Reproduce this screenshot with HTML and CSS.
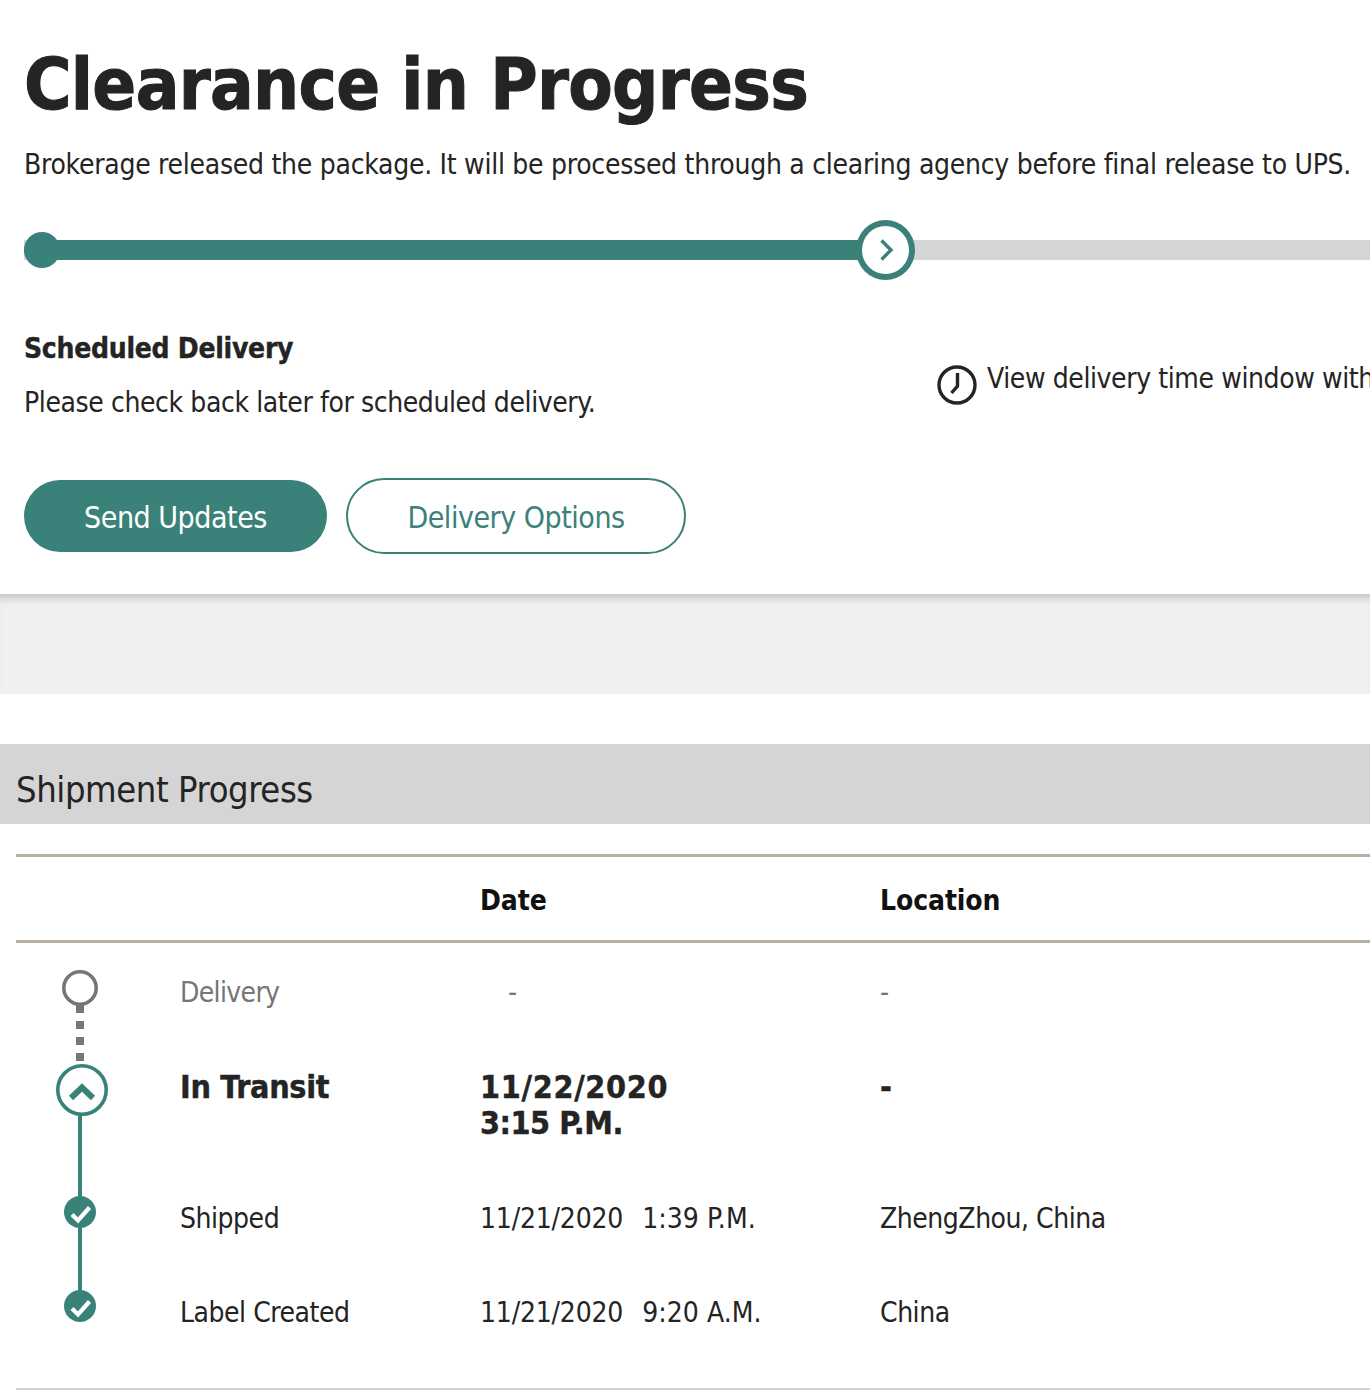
FILE: index.html
```html
<!DOCTYPE html>
<html lang="en">
<head>
<meta charset="utf-8">
<title>Clearance in Progress</title>
<link rel="stylesheet" href="styles.css">
</head>
<body>
<section class="status">
  <h1 class="title">Clearance in Progress</h1>
  <p class="lede">Brokerage released the package. It will be processed through a clearing agency before final release to UPS.</p>
  <div class="track">
    <div class="track-fill"></div>
    <span class="track-start"></span>
    <span class="track-now">
      <svg width="20" height="24" viewBox="0 0 20 24"><path d="M5.5 2.5 15 12 5.5 21.5" fill="none" stroke="#3a8279" stroke-width="3.4"/></svg>
    </span>
  </div>
  <div class="schedule">
    <div class="schedule-main">
      <h2 class="schedule-title">Scheduled Delivery</h2>
      <p class="schedule-text">Please check back later for scheduled delivery.</p>
    </div>
    <div class="window">
      <svg class="clock" width="40" height="40" viewBox="0 0 40 40"><circle cx="20" cy="20" r="18" fill="none" stroke="#242424" stroke-width="3.4"/><path d="M20.5 8V21L14.5 28" fill="none" stroke="#242424" stroke-width="3.4"/></svg>
      <span class="window-text">View delivery time window with</span>
    </div>
  </div>
  <div class="actions">
    <a class="btn btn-solid">Send Updates</a>
    <a class="btn btn-line">Delivery Options</a>
  </div>
</section>
<div class="band"></div>
<section class="progress">
  <h2 class="progress-bar">Shipment Progress</h2>
  <div class="table">
    <div class="table-head">
      <span></span><span></span>
      <span>Date</span><span>Location</span>
    </div>
    <div class="table-body">
      <svg class="timeline" width="164" height="445" viewBox="0 0 164 445">
        <circle cx="64" cy="45" r="16.2" fill="none" stroke="#767676" stroke-width="3.6"/>
        <path d="M64 62V121" stroke="#767676" stroke-width="8" stroke-dasharray="8 8" fill="none"/>
        <path d="M64 172V347" stroke="#3a8279" stroke-width="4" fill="none"/>
        <circle cx="66" cy="147" r="24.2" fill="#fff" stroke="#3a8279" stroke-width="3.6"/>
        <path d="M55 155 66 144.5 77 155" fill="none" stroke="#3a8279" stroke-width="6"/>
        <circle cx="64" cy="269" r="16" fill="#3a8279"/>
        <path d="M56 271.5 62 277.5 73.5 264.5" fill="none" stroke="#fff" stroke-width="4.2"/>
        <circle cx="64" cy="363" r="16" fill="#3a8279"/>
        <path d="M56 365.5 62 371.5 73.5 358.5" fill="none" stroke="#fff" stroke-width="4.2"/>
      </svg>
      <div class="row row-muted"><span>Delivery</span><span class="dash">-</span><span>-</span></div>
      <div class="row row-current"><span class="current-name">In Transit</span><span class="current-when"><span class="current-date">11/22/2020</span><span class="current-time">3:15 P.M.</span></span><span>-</span></div>
      <div class="row"><span>Shipped</span><span class="when"><span class="when-date">11/21/2020</span><span>1:39 P.M.</span></span><span>ZhengZhou, China</span></div>
      <div class="row"><span>Label Created</span><span class="when"><span class="when-date">11/21/2020</span><span>9:20 A.M.</span></span><span>China</span></div>
    </div>
  </div>
</section>
</body>
</html>
```
FILE: styles.css
```css
* { box-sizing: border-box; }
html, body { margin: 0; padding: 0; }
body {
  width: 1370px;
  height: 1396px;
  overflow: hidden;
  background: #fff;
  color: #242424;
  font-family: "DejaVu Sans Condensed", "DejaVu Sans", sans-serif;
  font-size: 28px;
  line-height: 36px;
  letter-spacing: -0.4px;
}
.status { padding: 40px 0 0 24px; height: 594px; }
.title {
  margin: 0;
  font-size: 72px;
  line-height: 88px;
  font-weight: 700;
  white-space: nowrap;
  letter-spacing: -0.67px;
  -webkit-text-stroke: 1px #242424;
}
.lede { margin: 19px 0 0; white-space: nowrap; height: 36px; letter-spacing: -0.27px; }
.track {
  position: relative;
  height: 20px;
  margin: 57px 0 0;
  background: #d5d5d5;
}
.track-fill { width: 836px; height: 20px; background: #3a8279; border-radius: 10px 0 0 10px; }
.track-start {
  position: absolute;
  left: 0;
  top: -8px;
  width: 36px;
  height: 36px;
  border-radius: 50%;
  background: #3a8279;
}
.track-now {
  position: absolute;
  left: 832px;
  top: -20px;
  width: 59px;
  height: 60px;
  border-radius: 50%;
  border: 6px solid #3a8279;
  background: #fff;
  display: flex;
  align-items: center;
  justify-content: center;
}
.schedule { display: flex; margin-top: 71px; }
.schedule-main { width: 913px; flex: none; }
.schedule-title { margin: 0; font-size: 28px; line-height: 36px; font-weight: 700; letter-spacing: -0.28px; -webkit-text-stroke: 0.4px #242424; }
.schedule-text { margin: 18px 0 0; }
.window { display: flex; margin-top: 30px; gap: 10px; white-space: nowrap; align-items: flex-start; }
.clock { flex: none; margin-top: 4px; }
.window-text { margin-top: 0; }
.actions { display: flex; align-items: center; gap: 19px; margin-top: 57px; }
.btn { display: flex; align-items: center; justify-content: center; border-radius: 38px; font-size: 30px; white-space: nowrap; letter-spacing: -0.47px; padding-top: 4px; }
.btn-solid { width: 303px; height: 72px; background: #3a8279; color: #fff; }
.btn-line { width: 340px; height: 76px; border: 2px solid #3a8279; color: #3a8279; }
.band { height: 100px; background: #f0f0ee; box-shadow: inset 0 10px 8px -6px #c4c4c2; }
.progress { margin-top: 50px; }
.progress-bar {
  margin: 0;
  height: 80px;
  padding: 0 16px;
  background: #d5d5d5;
  font-size: 36px;
  font-weight: 400;
  line-height: 92px;
}
.table { margin: 30px 0 0 16px; }
.table-head {
  display: grid;
  grid-template-columns: 164px 300px 400px 1fr;
  height: 89px;
  padding-top: 5px;
  border-top: 3px solid #b8b0a2;
  border-bottom: 3px solid #b8b0a2;
  align-items: center;
  font-weight: 700;
  color: #111;
  letter-spacing: -0.1px;
}
.table-body {
  display: grid;
  grid-template-columns: 164px 1fr;
  height: 447px;
  grid-template-rows: 126px 132px 94px 94px;
  border-bottom: 2px solid #d5d5d5;
}
.timeline { grid-column: 1; grid-row: 1 / span 4; }
.row {
  grid-column: 2;
  display: grid;
  grid-template-columns: 300px 400px 1fr;
  align-items: start;
  white-space: nowrap;
  letter-spacing: -0.47px;
}
.row-muted { color: #767676; padding-top: 32px; letter-spacing: -0.65px; }
.dash { padding-left: 28px; }
.row-current { font-size: 32px; font-weight: 700; -webkit-text-stroke: 0.4px #242424; }
.current-name { letter-spacing: -0.3px; }
.current-when { display: flex; flex-direction: column; }
.current-date { letter-spacing: 0.7px; }
.current-time { letter-spacing: -0.5px; }
.when { display: flex; gap: 19px; letter-spacing: 0.05px; }
.when-date { letter-spacing: -0.2px; }
```
